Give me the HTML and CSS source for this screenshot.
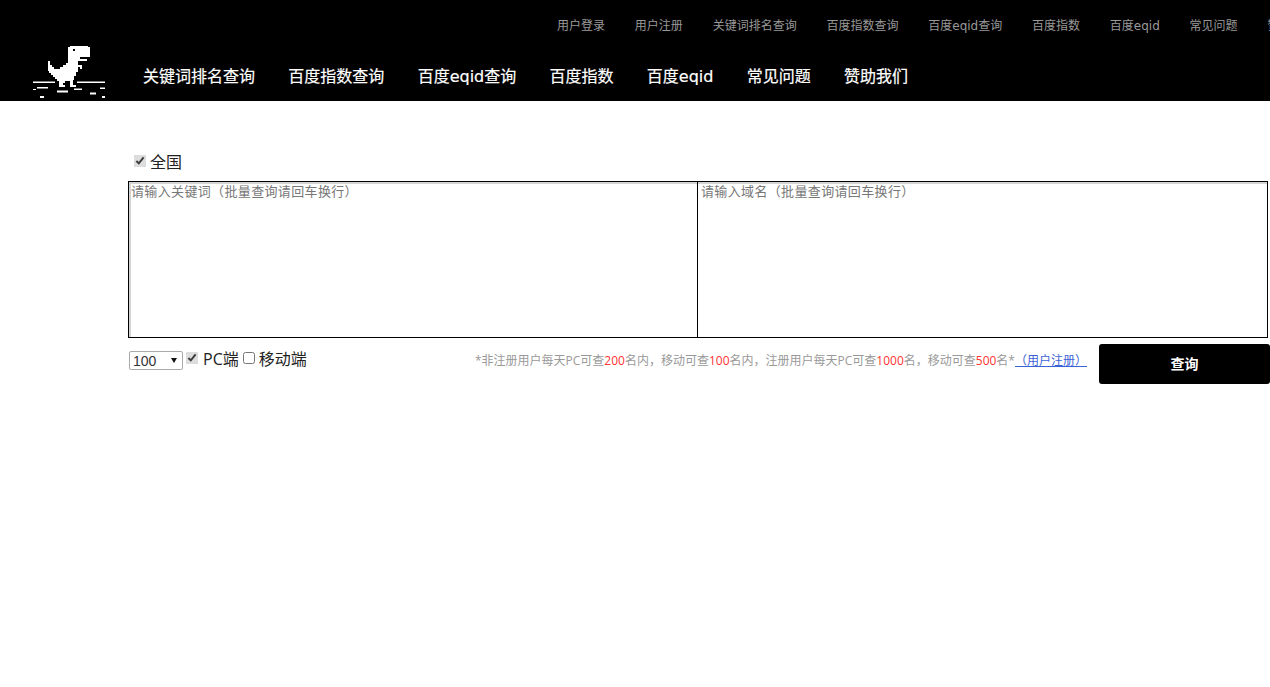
FILE: index.html
```html
<!DOCTYPE html>
<html lang="zh">
<head>
<meta charset="utf-8">
<title>百度关键词排名查询</title>
<link rel="stylesheet" href="styles.css">
</head>
<body>
<header class="site-header">
  <nav class="top-nav">
    <a href="#">用户登录</a>
    <a href="#">用户注册</a>
    <a href="#">关键词排名查询</a>
    <a href="#">百度指数查询</a>
    <a href="#">百度eqid查询</a>
    <a href="#">百度指数</a>
    <a href="#">百度eqid</a>
    <a href="#">常见问题</a>
    <a href="#">赞助我们</a>
  </nav>
  <div class="main-bar">
    <svg class="logo" width="72" height="54" viewBox="33 46 72 54" aria-label="logo">
      <path fill="#fff" d="M69 47H70V46H88V47H90V57H80V59H87V61H78V65H82V69H80V67H78V72H76V76H74V80H73V85H76V87H70V81H65V83H63V85H65V87H59V81H57V79H55V77H53V75H51V73H49V71H48V61H50V65H52V67H54V69H60V67H63V65H66V63H68V47Z"/>
      <rect fill="#000" x="73" y="49" width="2" height="2"/>
      <g fill="#fff">
        <rect x="33" y="81.5" width="22" height="1.5"/>
        <rect x="77" y="81.5" width="28" height="1.5"/>
        <rect x="33" y="89" width="3" height="1"/>
        <rect x="37" y="87" width="11" height="1.5"/>
        <rect x="40" y="96" width="4" height="2"/>
        <rect x="57" y="90.5" width="11" height="2"/>
        <rect x="74" y="88.5" width="8" height="1.5"/>
        <rect x="90" y="92.5" width="6" height="2"/>
        <rect x="100" y="87.5" width="5" height="1.5"/>
        <rect x="102" y="96" width="3" height="2"/>
      </g>
    </svg>
    <nav class="main-nav">
      <a href="#">关键词排名查询</a>
      <a href="#">百度指数查询</a>
      <a href="#">百度eqid查询</a>
      <a href="#">百度指数</a>
      <a href="#">百度eqid</a>
      <a href="#">常见问题</a>
      <a href="#">赞助我们</a>
    </nav>
  </div>
</header>
<main class="content">
  <label class="region"><input type="checkbox" checked>全国</label>
  <div class="inputs">
    <textarea class="box box-left" placeholder="请输入关键词（批量查询请回车换行）"></textarea>
    <textarea class="box box-right" placeholder="请输入域名（批量查询请回车换行）"></textarea>
  </div>
  <div class="controls">
    <span class="count-wrap"><select class="count"><option>100</option></select></span>
    <label class="opt"><input type="checkbox" checked>PC端</label>
    <label class="opt"><input type="checkbox">移动端</label>
    <p class="note">*非注册用户每天PC可查<em>200</em>名内，移动可查<em>100</em>名内，注册用户每天PC可查<em>1000</em>名，移动可查<em>500</em>名*<a href="#">（用户注册）</a></p>
    <button class="submit" type="button">查询</button>
  </div>
</main>
</body>
</html>
```
FILE: styles.css
```css
* { box-sizing: border-box; }
html, body { margin: 0; height: 100%; overflow: hidden; background: #fff; }
body { font-family: "Open Sans", "Noto Sans CJK SC", sans-serif; color: #222; }
a { text-decoration: none; }

.site-header { height: 101px; background: #000; overflow: hidden; }
.top-nav { display: flex; gap: 29.8px; height: 46px; padding: 18px 0 0 557px; white-space: nowrap; font-family: "DejaVu Sans", "Noto Sans CJK SC", sans-serif; }
.top-nav a { color: #999; font-size: 12px; line-height: 16px; flex: none; }
.main-bar { display: flex; align-items: flex-start; padding-left: 33px; }
.logo { display: block; flex: none; }
.main-nav { display: flex; gap: 33.3px; margin-left: 38px; padding-top: 20px; font-family: "DejaVu Sans", "Noto Sans CJK SC", sans-serif; }
.main-nav a { color: #fff; font-size: 16px; line-height: 22px; -webkit-text-stroke: 0.2px #fff; white-space: nowrap; }

.content { padding-left: 128px; }
.region { display: flex; align-items: center; height: 24px; margin: 48px 0 8px 6px; font-size: 16px; }
input[type="checkbox"] { width: 12px; height: 12px; margin: 0 4px 0 0; accent-color: #ddd; }
.inputs { display: flex; width: 1140px; }
.box {
  display: block; height: 157px; margin: 0; padding: 2px 0 0 2px; resize: none;
  border: 1px solid #000; box-shadow: inset 2px 2px 0 #d4d4d4; border-radius: 0;
  font: 13px/16px "Liberation Sans", "Noto Sans CJK SC", sans-serif; letter-spacing: .35px; outline: none; background: #fff;
}
.box::placeholder { color: #777; }
.box-left { width: 569px; border-right: 0; }
.box-right { width: 571px; padding-left: 3px; box-shadow: inset 0 2px 0 #d4d4d4; }

.controls { display: flex; align-items: flex-start; margin-top: 6px; }
.count-wrap { position: relative; display: block; width: 54px; height: 19px; margin: 7px 3px 0 1px; flex: none; }
.count-wrap::after { content: ""; position: absolute; right: 6px; top: 7px; border: 3px solid transparent; border-top: 5px solid #111; border-bottom: 0; pointer-events: none; }
.count { display: block; appearance: none; width: 54px; height: 19px; margin: 0; padding: 0 0 0 3px; font: 14px "Liberation Sans", sans-serif; color: #333; background: #fff; border: 1px solid #aaa; border-radius: 2px; }
.opt { display: flex; align-items: center; height: 20px; margin: 4px 4px 0 0; font-size: 16px; }
.opt input { margin-right: 5px; }
.opt + .opt input { margin-right: 4px; }
.note { margin: 8px 12px 0 auto; font-size: 12px; line-height: 18px; color: #999; white-space: nowrap; }
.note em { font-style: normal; color: #f33; }
.note a { color: #3b62d6; text-decoration: underline; }
.submit { width: 171px; height: 40px; flex: none; margin: 0; padding: 0 0 2px; border: 0; border-radius: 3px; background: #000; color: #fff; font: bold 14px "Liberation Sans", "Noto Sans CJK SC", sans-serif; }
```
